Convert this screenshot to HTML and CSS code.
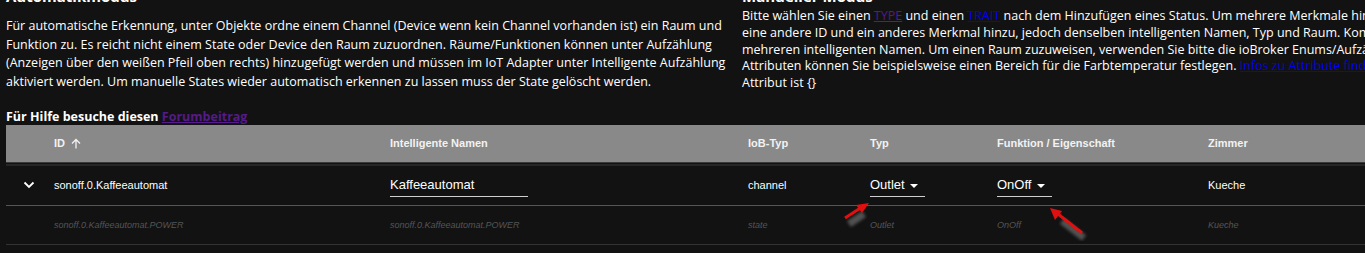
FILE: index.html
```html
<!DOCTYPE html>
<html lang="de">
<head>
  <meta charset="UTF-8" />
  <title>Smart Names</title>
  <link rel="stylesheet" href="styles.css">
</head>
<body>

  <div class="page">
    <div class="intro">
      <div class="col auto">
        <h3>Automatikmodus</h3>
        <p>
          Für automatische Erkennung, unter Objekte ordne einem Channel (Device wenn kein Channel vorhanden ist) ein Raum und<br>
          Funktion zu. Es reicht nicht einem State oder Device den Raum zuzuordnen. Räume/Funktionen können unter Aufzählung<br>
          (Anzeigen über den weißen Pfeil oben rechts) hinzugefügt werden und müssen im IoT Adapter unter Intelligente Aufzählung<br>
          aktiviert werden. Um manuelle States wieder automatisch erkennen zu lassen muss der State gelöscht werden.
        </p>
      </div>
      <div class="col manual">
        <h3>Manueller Modus</h3>
        <p>
          Bitte wählen Sie einen <a class="visited" href="#">TYPE</a> und einen <a href="#">TRAIT</a> nach dem Hinzufügen eines Status. Um mehrere Merkmale hinzuzufügen, fügen Sie<br>
          eine andere ID und ein anderes Merkmal hinzu, jedoch denselben intelligenten Namen, Typ und Raum. Kommas trennen<br>
          mehreren intelligenten Namen. Um einen Raum zuzuweisen, verwenden Sie bitte die ioBroker Enums/Aufzählungen. Mit<br>
          Attributen können Sie beispielsweise einen Bereich für die Farbtemperatur festlegen. <a href="#">Infos zu Attribute finden Sie hier</a>. Standard<br>
          Attribut ist {}
        </p>
      </div>
    </div>

    <div class="help">Für Hilfe besuche diesen <a class="visited" href="#">Forumbeitrag</a></div>

    <div class="table">
      <div class="row head">
        <div></div>
        <div class="id-head">ID
          <svg width="10" height="11" viewBox="0 0 10 11"><path d="M5 10.5 V1.5 M1 5.5 L5 1.5 L9 5.5" fill="none" stroke="#f2f2f2" stroke-width="1.3"/></svg>
        </div>
        <div>Intelligente Namen</div>
        <div>IoB-Typ</div>
        <div>Typ</div>
        <div>Funktion / Eigenschaft</div>
        <div>Zimmer</div>
      </div>
      <div class="row main">
        <div class="toggle">
          <svg width="12" height="8" viewBox="0 0 12 8"><path d="M1.5 1.5 L6 6 L10.5 1.5" fill="none" stroke="#fff" stroke-width="1.8"/></svg>
        </div>
        <div>sonoff.0.Kaffeeautomat</div>
        <div><span class="field name">Kaffeeautomat</span></div>
        <div>channel</div>
        <div><span class="field select">Outlet <span class="caret"></span></span></div>
        <div><span class="field select">OnOff <span class="caret"></span></span></div>
        <div>Kueche</div>
      </div>
      <div class="row sub">
        <div></div>
        <div>sonoff.0.Kaffeeautomat.POWER</div>
        <div>sonoff.0.Kaffeeautomat.POWER</div>
        <div>state</div>
        <div>Outlet</div>
        <div>OnOff</div>
        <div>Kueche</div>
      </div>
    </div>

    <svg class="arrows" width="1365" height="253" viewBox="0 0 1365 253">
      <defs>
        <filter id="blur"><feGaussianBlur stdDeviation="1.6"/></filter>
      </defs>
      <g filter="url(#blur)" opacity="0.75">
        <path d="M849 224 L864 214" stroke="#666" stroke-width="7"/>
        <path d="M1084 238 L1062 221" stroke="#666" stroke-width="7"/>
      </g>
      <path d="M845 218 L862 207" stroke="#e01010" stroke-width="3"/>
      <polygon points="869,203 856,205 862,213" fill="#e01010"/>
      <path d="M1082 233 L1058 214" stroke="#e01010" stroke-width="3"/>
      <polygon points="1050,208 1055,220 1062,211" fill="#e01010"/>
    </svg>
  </div>

</body>
</html>
```

FILE: styles.css
```css
* {
  box-sizing: border-box;
}

html, body {
  margin: 0;
  background: #121212;
  overflow: hidden;
}

body {
  font-family: 'Open Sans', sans-serif;
  color: #fff;
}

.page {
  position: relative;
  width: 1365px;
  height: 253px;
  overflow: hidden;
}

.intro {
  display: grid;
  grid-template-columns: 736px 760px;
  margin-top: -13px;
  padding-left: 6px;
}

.col h3 {
  margin: 0;
  font-size: 15px;
  font-weight: bold;
  line-height: 19px;
}

.col p {
  margin: 0;
  font-size: 12.5px;
  white-space: nowrap;
}

.auto p {
  margin-top: 11px;
  line-height: 18.7px;
}

.manual p {
  margin-top: 2px;
  line-height: 16.8px;
}

a {
  color: #0000ee;
  text-decoration: underline;
}

a.visited {
  color: #551a8b;
}

.help {
  margin-top: 17px;
  padding-left: 6px;
  font-size: 12.5px;
  font-weight: bold;
  line-height: 16px;
}

.table {
  margin-left: 6px;
  font-family: 'Liberation Sans', Arial, sans-serif;
}

.row {
  display: grid;
  grid-template-columns: 48px 336px 358px 122px 127px 211px 157px;
  align-items: center;
}

.row.head {
  height: 38px;
  background: #898989;
  color: #f2f2f2;
  font-size: 11px;
  font-weight: bold;
  border-bottom: 1px solid #3a3a3a;
}

.id-head {
  display: flex;
  align-items: center;
  gap: 6px;
}

.row.main {
  height: 42px;
  border-top: 2px solid #262626;
  border-bottom: 1px solid #555;
  margin-top: 1px;
  font-size: 11px;
}

.toggle {
  display: flex;
  justify-content: center;
  padding-right: 2px;
}

.field {
  display: inline-block;
  font-size: 13px;
  padding-bottom: 4px;
  border-bottom: 1px solid #cfcfcf;
  margin-top: 3px;
}

.field.name {
  width: 138px;
}

.select {
  width: 55px;
}

.caret {
  display: inline-block;
  width: 0;
  height: 0;
  margin-left: 2px;
  vertical-align: middle;
  border-left: 4px solid transparent;
  border-right: 4px solid transparent;
  border-top: 4px solid #fff;
}

.row.sub {
  height: 39px;
  color: #555;
  font-size: 9px;
  font-style: italic;
  border-bottom: 1px solid #333;
}

.arrows {
  position: absolute;
  left: 0;
  top: 0;
  pointer-events: none;
}
```
